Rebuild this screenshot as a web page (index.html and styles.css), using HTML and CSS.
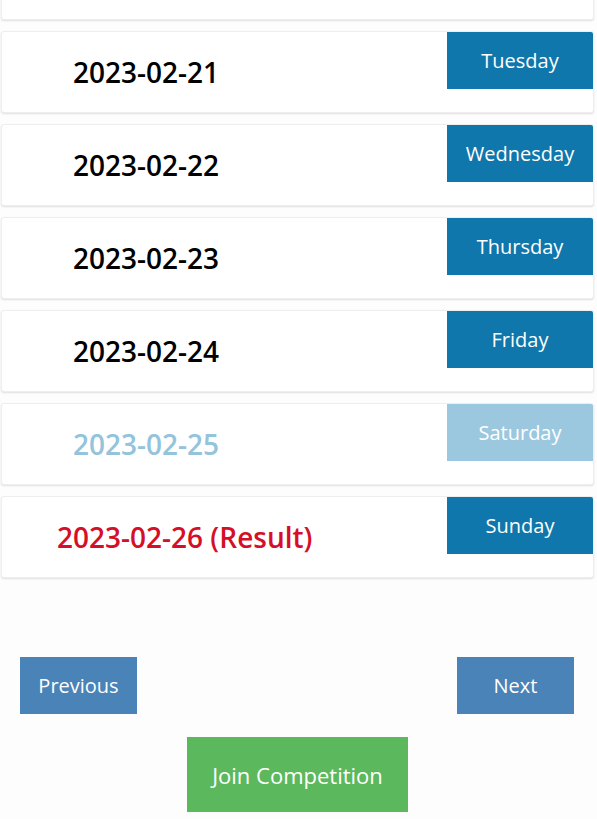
FILE: index.html
```html
<!DOCTYPE html>
<html lang="en">
<head>
  <meta charset="UTF-8">
  <title>Weekly Competition</title>
  <link rel="stylesheet" href="styles.css">
</head>
<body>
  <div class="day-list">
    <!-- previous day, scrolled mostly out of view -->
    <div class="day-card"></div>
    <div class="day-card">
      <div class="day-date">2023-02-21</div>
      <div class="day-name">Tuesday</div>
    </div>
    <div class="day-card">
      <div class="day-date">2023-02-22</div>
      <div class="day-name">Wednesday</div>
    </div>
    <div class="day-card">
      <div class="day-date">2023-02-23</div>
      <div class="day-name">Thursday</div>
    </div>
    <div class="day-card">
      <div class="day-date">2023-02-24</div>
      <div class="day-name">Friday</div>
    </div>
    <div class="day-card disabled">
      <div class="day-date">2023-02-25</div>
      <div class="day-name">Saturday</div>
    </div>
    <div class="day-card result">
      <div class="day-date">2023-02-26 (Result)</div>
      <div class="day-name">Sunday</div>
    </div>
  </div>

  <div class="nav-row">
    <button class="nav-btn">Previous</button>
    <button class="nav-btn">Next</button>
  </div>

  <div class="join-row">
    <button class="join-btn">Join Competition</button>
  </div>
</body>
</html>
```

FILE: styles.css
```css
body {
  margin: 0;
  background-color: #fcfdfc;
  font-family: 'Open Sans', 'Noto Sans', sans-serif;
  overflow: hidden;
}

.day-list {
  display: flex;
  flex-direction: column;
  gap: 11px;
  margin: -62px 3px 0 1px;
}

.day-card {
  display: flex;
  justify-content: space-between;
  align-items: flex-start;
  height: 80px;
  background-color: #fff;
  border: 1px solid #eeeeee;
  border-radius: 3px;
  box-shadow: 0 1px 2px rgba(0, 0, 0, 0.12);
  overflow: hidden;
}

.day-date {
  align-self: center;
  padding-left: 71px;
  font-size: 28px;
  font-weight: 600;
  color: #000;
}

.day-name {
  width: 146px;
  height: 57px;
  display: flex;
  align-items: center;
  justify-content: center;
  background-color: #0f77ab;
  color: #fff;
  font-size: 20px;
}

.day-card.disabled .day-date {
  color: #94c3dc;
}

.day-card.disabled .day-name {
  background-color: #9cc8df;
}

.day-card.result .day-date {
  padding-left: 55px;
  color: #d50f27;
}

.nav-row {
  display: flex;
  justify-content: space-between;
  padding: 0 23px 0 20px;
  margin-top: 79px;
}

.nav-btn {
  width: 117px;
  height: 57px;
  border: none;
  background-color: #4a83b8;
  color: #fff;
  font-family: 'Open Sans', 'Noto Sans', sans-serif;
  font-size: 20px;
  cursor: pointer;
}

.join-row {
  display: flex;
  justify-content: center;
  margin: 23px 2px 0 0;
}

.join-btn {
  width: 221px;
  height: 75px;
  border: none;
  background-color: #5cb85c;
  color: #fff;
  font-family: 'Open Sans', 'Noto Sans', sans-serif;
  font-size: 22px;
  cursor: pointer;
}
```
